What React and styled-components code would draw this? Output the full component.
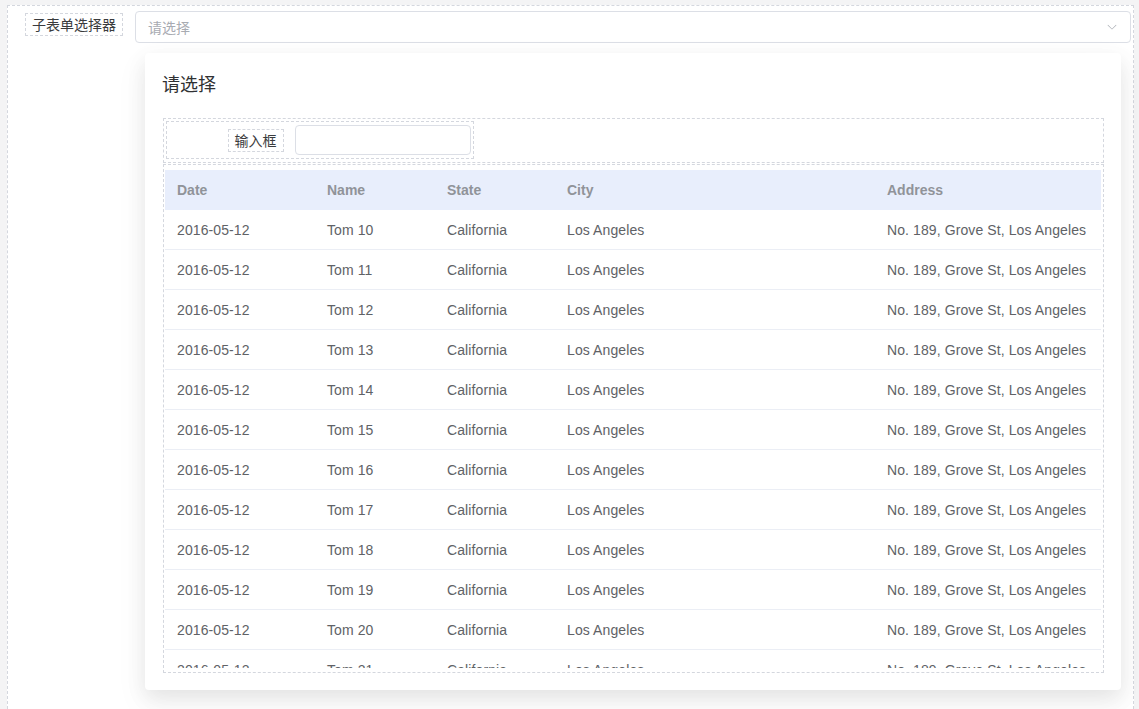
import React from 'react';
import styled, { createGlobalStyle } from 'styled-components';

const GlobalStyle = createGlobalStyle`
  html, body {
    margin: 0;
    padding: 0;
    background: #f4f4f5;
    font-family: "Liberation Sans", Arial, "Noto Sans CJK SC", sans-serif;
    overflow: hidden;
  }
`;

const rows = Array.from({ length: 12 }, (_, i) => ({
    date: '2016-05-12',
    name: `Tom ${i + 10}`,
    state: 'California',
    city: 'Los Angeles',
    address: 'No. 189, Grove St, Los Angeles',
}));

function Chevron() {
    return (
        <svg width="12" height="12" viewBox="0 0 1024 1024">
            <path
                fill="#a8abb2"
                d="M831.872 340.864 512 652.672 192.128 340.864a30.592 30.592 0 0 0-42.752 0 29.12 29.12 0 0 0 0 41.6L489.664 714.24a32 32 0 0 0 44.672 0l340.288-331.712a29.12 29.12 0 0 0 0-41.728 30.592 30.592 0 0 0-42.752 0z"
            />
        </svg>
    );
}

export default function App() {
    return (
        <Page>
            <GlobalStyle />
            <Canvas>
                <FormItem>
                    <LabelCol>
                        <DashedLabel>子表单选择器</DashedLabel>
                    </LabelCol>
                    <SelectWrap>
                        <Select>
                            <Placeholder>请选择</Placeholder>
                            <Chevron />
                        </Select>
                        <Popover>
                            <Title>请选择</Title>
                            <FilterBox>
                                <FilterItem>
                                    <FilterLabelCol>
                                        <DashedLabel>输入框</DashedLabel>
                                    </FilterLabelCol>
                                    <TextInput />
                                </FilterItem>
                            </FilterBox>
                            <TableBox>
                                <TableScroll>
                                    <HeadRow>
                                        <HeadCell>Date</HeadCell>
                                        <HeadCell>Name</HeadCell>
                                        <HeadCell>State</HeadCell>
                                        <HeadCell>City</HeadCell>
                                        <HeadCell>Address</HeadCell>
                                    </HeadRow>
                                    {rows.map((r) => (
                                        <BodyRow key={r.name}>
                                            <Cell>{r.date}</Cell>
                                            <Cell>{r.name}</Cell>
                                            <Cell>{r.state}</Cell>
                                            <Cell>{r.city}</Cell>
                                            <Cell>{r.address}</Cell>
                                        </BodyRow>
                                    ))}
                                </TableScroll>
                            </TableBox>
                        </Popover>
                    </SelectWrap>
                </FormItem>
            </Canvas>
        </Page>
    );
}

const Page = styled.div`
    padding: 5px 5px 0 7px;
    height: 100vh;
    box-sizing: border-box;
`;

const Canvas = styled.div`
    height: 100%;
    box-sizing: border-box;
    background: #fff;
    border: 1px dashed #d4d7de;
    border-bottom: none;
    padding: 5px 2px 0 0;
`;

const FormItem = styled.div`
    display: flex;
    align-items: flex-start;
`;

const LabelCol = styled.div`
    width: 115px;
    flex-shrink: 0;
    display: flex;
    justify-content: flex-end;
    margin-right: 12px;
    padding-top: 2px;
`;

const DashedLabel = styled.div`
    border: 1px dashed #d4d7de;
    padding: 0 6px;
    line-height: 21px;
    font-size: 14px;
    color: #3a3b3d;
    font-family: "Noto Sans CJK SC", sans-serif;
    white-space: nowrap;
`;

const SelectWrap = styled.div`
    position: relative;
    flex: 1;
`;

const Select = styled.div`
    height: 32px;
    box-sizing: border-box;
    border: 1px solid #dcdfe6;
    border-radius: 4px;
    display: flex;
    align-items: center;
    justify-content: space-between;
    padding: 0 12px;
`;

const Placeholder = styled.span`
    font-size: 14px;
    color: #a8abb2;
    font-family: "Noto Sans CJK SC", sans-serif;
`;

const Popover = styled.div`
    position: absolute;
    top: 42px;
    left: 10px;
    right: 10px;
    background: #fff;
    border-radius: 4px;
    box-shadow: 0 12px 32px 4px rgba(0, 0, 0, 0.04), 0 8px 20px rgba(0, 0, 0, 0.08);
    padding: 17px 17px 17px 18px;
    z-index: 10;
`;

const Title = styled.div`
    font-size: 18px;
    line-height: 26px;
    color: #303133;
    font-family: "Noto Sans CJK SC", sans-serif;
    margin: 0 0 22px -1px;
`;

const FilterBox = styled.div`
    border: 1px dashed #d4d7de;
    padding: 2px 2px 3px;
    margin-bottom: 1px;
`;

const FilterItem = styled.div`
    width: 308px;
    box-sizing: border-box;
    border: 1px dashed #d4d7de;
    display: flex;
    align-items: center;
    padding: 3px 2px;
`;

const FilterLabelCol = styled.div`
    width: 115px;
    display: flex;
    justify-content: flex-end;
    margin-right: 11px;
`;

const TextInput = styled.div`
    width: 177px;
    height: 30px;
    box-sizing: border-box;
    border: 1px solid #dcdfe6;
    border-radius: 4px;
`;

const TableBox = styled.div`
    border: 1px dashed #d4d7de;
    padding: 5px 2px 4px 1px;
`;

const TableScroll = styled.div`
    height: 498px;
    overflow: hidden;
`;

const columns = '150px 120px 120px 320px 1fr';

const HeadRow = styled.div`
    display: grid;
    grid-template-columns: ${columns};
    height: 40px;
    background: #e8eefc;
    align-items: center;
`;

const HeadCell = styled.div`
    padding-left: 12px;
    font-size: 14px;
    font-weight: bold;
    color: #909399;
`;

const BodyRow = styled.div`
    display: grid;
    grid-template-columns: ${columns};
    height: 40px;
    box-sizing: border-box;
    border-bottom: 1px solid #ebeef5;
    align-items: center;
`;

const Cell = styled.div`
    padding-left: 12px;
    font-size: 14px;
    letter-spacing: 0.1px;
    color: #606266;
    white-space: nowrap;
`;
